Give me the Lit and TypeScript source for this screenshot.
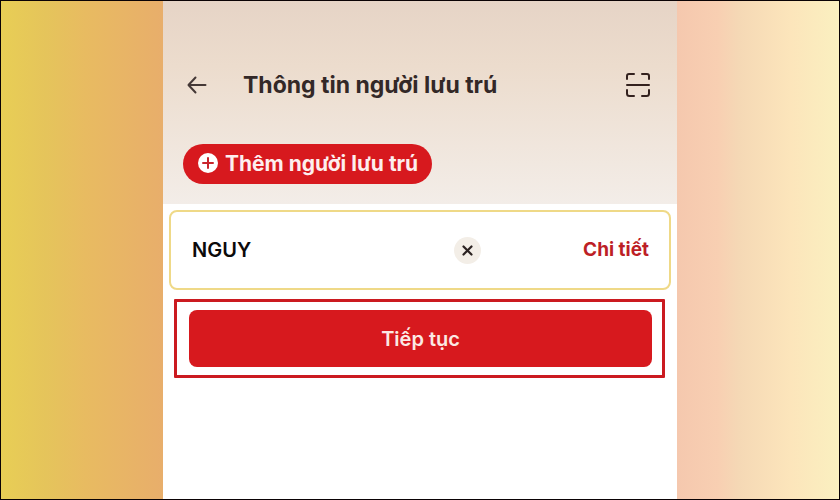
import { LitElement, html, css } from "lit";
import { customElement, property } from "lit/decorators.js";

@customElement("guest-card")
class GuestCard extends LitElement {
  @property() name = "";

  static styles = css`
    :host {
      display: block;
    }
    .card {
      box-sizing: border-box;
      display: grid;
      grid-template-columns: 1fr auto 1fr;
      align-items: center;
      min-height: 80px;
      padding: 0 20px 0 21px;
      border: 2px solid #efd987;
      border-radius: 8px;
      background: #fff;
    }
    .name {
      justify-self: start;
      white-space: nowrap;
      font-size: 20px;
      line-height: 28px;
      font-weight: 600;
      color: #0c0a0a;
    }
    .remove {
      display: grid;
      place-items: center;
      width: 27px;
      height: 27px;
      margin-left: 94px;
      padding: 0;
      border: 0;
      border-radius: 50%;
      background: #f3eee7;
      color: #2b2221;
    }
    .detail {
      justify-self: end;
      font-size: 19px;
      line-height: 28px;
      font-weight: 700;
      color: #bd1f26;
      text-decoration: none;
    }
  `;

  render() {
    return html`
      <article class="card">
        <span class="name">${this.name}</span>
        <button class="remove" aria-label="Xóa">
          <svg width="11" height="11" viewBox="0 0 11 11" fill="none" stroke="currentColor" stroke-width="2.2" stroke-linecap="round">
            <path d="M1.500 1.500 9.500 9.500M9.500 1.500 1.500 9.500" />
          </svg>
        </button>
        <a class="detail" href="#">Chi tiết</a>
      </article>
    `;
  }
}

@customElement("app-root")
class AppRoot extends LitElement {
  static styles = css`
    :host {
      display: block;
      font-family: Inter, "Liberation Sans", sans-serif;
    }
    button {
      font-family: inherit;
      cursor: pointer;
    }
    .page {
      box-sizing: border-box;
      min-height: 100vh;
      display: grid;
      grid-template-columns: 162fr 514fr 162fr;
      border: 1px solid #0a0204;
    }
    .left {
      background: linear-gradient(90deg, #e8ce55, #e5c45b 28%, #e8bb61 52%, #e8ae6b);
    }
    .right {
      background: linear-gradient(90deg, #f5c8ae, #f8cfb2 25%, #f5d8b5 38%, #fce5bb 70%, #faf0c0);
    }
    .screen {
      background: #fff;
    }
    header {
      padding: 68px 25px 20px 20px;
      background: linear-gradient(#e6d4c6, #ecdccd 32%, #f3ede8);
    }
    .bar {
      display: flex;
      align-items: center;
    }
    .icon {
      display: grid;
      place-items: center;
      width: 28px;
      height: 32px;
      padding: 0;
      border: 0;
      background: none;
      color: #443836;
    }
    .scan {
      color: #33211e;
    }
    h1 {
      flex: 1;
      margin: 0;
      padding-left: 32px;
      font-size: 23px;
      line-height: 32px;
      font-weight: 700;
      color: #332827;
    }
    .add {
      display: inline-flex;
      align-items: center;
      gap: 6px;
      height: 40px;
      margin-top: 43px;
      padding: 0 14px;
      border: 0;
      border-radius: 20px;
      background: #d7191e;
      color: #fdeeee;
      font-size: 21px;
      line-height: 28px;
      font-weight: 700;
      white-space: nowrap;
      vertical-align: top;
    }
    main {
      padding: 6px;
    }
    .highlight {
      margin: 9px 6px 0 5px;
      padding: 8px 10px 8px 12px;
      border: 3px solid #cb1a20;
      border-radius: 1px;
    }
    .next {
      display: block;
      width: 100%;
      height: 57px;
      padding: 0;
      border: 0;
      border-radius: 8px;
      background: #d7191e;
      color: #fbe9e4;
      font-size: 20px;
      line-height: 28px;
      font-weight: 600;
    }
  `;

  render() {
    return html`
      <div class="page">
        <div class="left"></div>
        <div class="screen">
          <header>
            <div class="bar">
              <button class="icon" aria-label="Quay lại">
                <svg width="20" height="18" viewBox="0 0 20 18" fill="none" stroke="currentColor" stroke-width="2" stroke-linecap="round" stroke-linejoin="round">
                  <path d="M18.500 9H2M8.500 1.500 1.500 9 8.500 16.500" />
                </svg>
              </button>
              <h1>Thông tin người lưu trú</h1>
              <button class="icon scan" aria-label="Quét mã">
                <svg width="26" height="26" viewBox="0 0 26 26" fill="none" stroke="currentColor" stroke-width="2" stroke-linecap="round" stroke-linejoin="round">
                  <path d="M2 7V4Q2 2 4 2H9M17 2H22Q24 2 24 4V7M24 18V21.500Q24 24 21.500 24H17M9 24H4.500Q2 24 2 21.500V18M2 13H24" />
                </svg>
              </button>
            </div>
            <button class="add">
              <svg width="22" height="22" viewBox="0 0 22 22">
                <circle cx="11" cy="10" r="10" fill="#fff" />
                <path d="M11 5V15M6 10H16" fill="none" stroke="#c9252c" stroke-width="2" stroke-linecap="round" />
              </svg>
              Thêm người lưu trú
            </button>
          </header>
          <main>
            <guest-card name="NGUY"></guest-card>
            <div class="highlight">
              <button class="next">Tiếp tục</button>
            </div>
          </main>
        </div>
        <div class="right"></div>
      </div>
    `;
  }
}
